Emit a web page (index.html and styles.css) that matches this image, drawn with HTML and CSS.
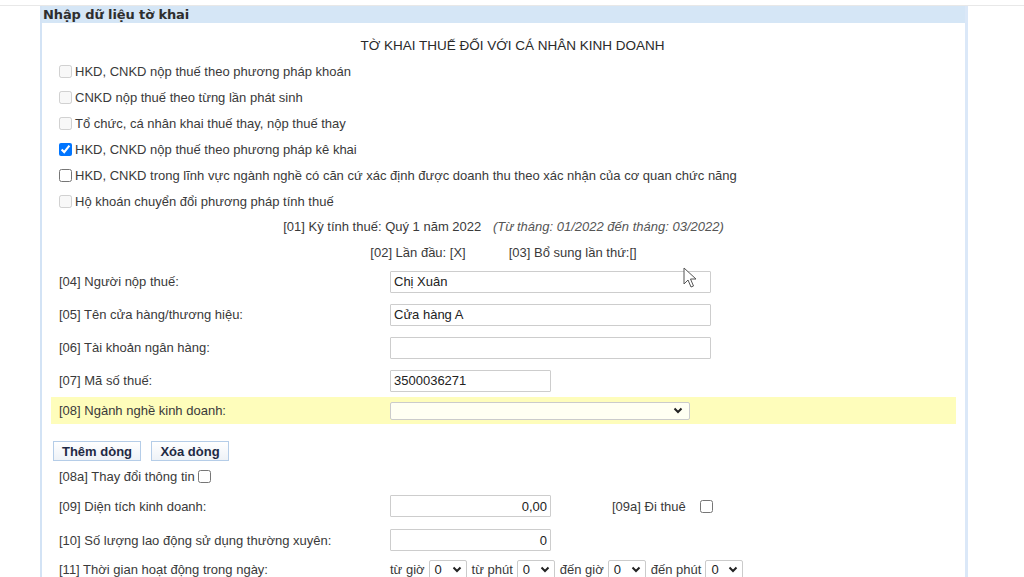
FILE: index.html
```html
<!DOCTYPE html>
<html lang="vi">
<head>
<meta charset="utf-8">
<title>Nhập dữ liệu tờ khai</title>
<link rel="stylesheet" href="styles.css">
</head>
<body>
<div class="topbar"></div>
<div class="panel">
  <div class="panel-head">Nhập dữ liệu tờ khai</div>
  <div class="panel-body">
    <div class="title">TỜ KHAI THUẾ ĐỐI VỚI CÁ NHÂN KINH DOANH</div>
    <div class="checks">
      <label class="chk disabled"><input type="checkbox" disabled>HKD, CNKD nộp thuế theo phương pháp khoán</label>
      <label class="chk disabled"><input type="checkbox" disabled>CNKD nộp thuế theo từng lần phát sinh</label>
      <label class="chk disabled"><input type="checkbox" disabled>Tổ chức, cá nhân khai thuế thay, nộp thuế thay</label>
      <label class="chk"><input type="checkbox" checked>HKD, CNKD nộp thuế theo phương pháp kê khai</label>
      <label class="chk"><input type="checkbox">HKD, CNKD trong lĩnh vực ngành nghề có căn cứ xác định được doanh thu theo xác nhận của cơ quan chức năng</label>
      <label class="chk disabled"><input type="checkbox" disabled>Hộ khoán chuyển đổi phương pháp tính thuế</label>
    </div>
    <div class="period">[01] Kỳ tính thuế: Quý 1 năm 2022 <em class="range">(Từ tháng: 01/2022 đến tháng: 03/2022)</em></div>
    <div class="period2"><span>[02] Lần đầu: [X]</span><span>[03] Bổ sung lần thứ:[]</span></div>

    <div class="row"><span class="lbl">[04] Người nộp thuế:</span><input class="txt wide" type="text" value="Chị Xuân"></div>
    <div class="row"><span class="lbl">[05] Tên cửa hàng/thương hiệu:</span><input class="txt wide" type="text" value="Cửa hàng A"></div>
    <div class="row"><span class="lbl">[06] Tài khoản ngân hàng:</span><input class="txt wide" type="text" value=""></div>
    <div class="row"><span class="lbl">[07] Mã số thuế:</span><input class="txt short" type="text" value="3500036271"></div>
    <div class="row hl"><span class="lbl">[08] Ngành nghề kinh doanh:</span>
      <div class="sel big"><span class="val"></span><svg class="chev" width="10" height="7" viewBox="0 0 10 7"><polyline points="1.5,1.5 5,5 8.5,1.5" fill="none" stroke="#222" stroke-width="2"/></svg></div>
    </div>

    <div class="btns">
      <button class="btn b1" type="button">Thêm dòng</button>
      <button class="btn b2" type="button">Xóa dòng</button>
    </div>
    <div class="row r08a"><span>[08a] Thay đổi thông tin</span><input class="cb" type="checkbox"></div>
    <div class="row r2"><span class="lbl">[09] Diện tích kinh doanh:</span><input class="txt short num" type="text" value="0,00"><span class="rent">[09a] Đi thuê</span><input class="cb cb-rent" type="checkbox"></div>
    <div class="row r2"><span class="lbl">[10] Số lượng lao động sử dụng thường xuyên:</span><input class="txt short num" type="text" value="0"></div>
    <div class="row r3"><span class="lbl">[11] Thời gian hoạt động trong ngày:</span>
      <span class="tm">từ giờ</span>
      <div class="sel small"><span class="val">0</span><svg class="chev" width="10" height="7" viewBox="0 0 10 7"><polyline points="1.5,1.5 5,5 8.5,1.5" fill="none" stroke="#222" stroke-width="2"/></svg></div>
      <span class="tm">từ phút</span>
      <div class="sel small"><span class="val">0</span><svg class="chev" width="10" height="7" viewBox="0 0 10 7"><polyline points="1.5,1.5 5,5 8.5,1.5" fill="none" stroke="#222" stroke-width="2"/></svg></div>
      <span class="tm">đến giờ</span>
      <div class="sel small"><span class="val">0</span><svg class="chev" width="10" height="7" viewBox="0 0 10 7"><polyline points="1.5,1.5 5,5 8.5,1.5" fill="none" stroke="#222" stroke-width="2"/></svg></div>
      <span class="tm">đến phút</span>
      <div class="sel small"><span class="val">0</span><svg class="chev" width="10" height="7" viewBox="0 0 10 7"><polyline points="1.5,1.5 5,5 8.5,1.5" fill="none" stroke="#222" stroke-width="2"/></svg></div>
    </div>
  </div>
</div>
<svg class="cursor" width="14" height="22" viewBox="0 0 14 22"><path d="M1 1 L1 17 L5 13 L8 20 L10.5 19 L7.5 12 L13 12 Z" fill="#fff" stroke="#555" stroke-width="1"/></svg>
</body>
</html>
```
FILE: styles.css
```css
html, body {
  margin: 0;
  padding: 0;
  background: #fff;
}
body {
  font-family: "Liberation Sans", Arial, sans-serif;
  font-size: 13px;
  color: #3a3a3a;
  height: 577px;
  overflow: hidden;
  position: relative;
}
.topbar {
  height: 5px;
  border-bottom: 1px solid #e8e8e8;
}
.panel {
  margin-left: 40px;
  width: 928px;
  box-sizing: border-box;
  border-left: 2px solid #d3e3f5;
  border-right: 3px solid #dbe8f8;
  min-height: 600px;
}
.panel-head {
  height: 17px;
  line-height: 17px;
  background: #d5e6f6;
  font-family: "DejaVu Sans", Verdana, sans-serif;
  font-weight: bold;
  color: #2e2e2e;
  padding-left: 1px;
  font-size: 13px;
  letter-spacing: -0.1px;
}
.panel-body {
  padding: 10px 9px 0 9px;
}
.title {
  height: 25px;
  line-height: 25px;
  text-align: center;
  padding-left: 18px;
  color: #2a2a2a;
  font-size: 13.5px;
}
.checks {
  display: flex;
  flex-direction: column;
}
.chk {
  display: flex;
  align-items: center;
  height: 26px;
  padding-left: 8px;
  color: #3a3a3a;
}
.chk input {
  margin: 0 3px 0 0;
  width: 13px;
  height: 13px;
}
.period {
  height: 26px;
  line-height: 26px;
  text-align: center;
}
.range {
  margin-left: 8px;
  color: #555;
}
.period2 {
  height: 25px;
  display: flex;
  justify-content: center;
  align-items: center;
  gap: 43px;
}
.row {
  display: flex;
  align-items: center;
  height: 33px;
  padding-left: 8px;
}
.lbl {
  width: 331px;
  flex: none;
}
.txt {
  box-sizing: border-box;
  height: 22px;
  border: 1px solid #cdcdcd;
  border-radius: 1px;
  padding: 0 3px;
  font-family: "Liberation Sans", Arial, sans-serif;
  font-size: 13px;
  color: #222;
  background: #fff;
  margin: 0;
  outline: none;
}
.wide { width: 321px; }
.short { width: 161px; }
.num { text-align: right; }
.hl {
  height: 27px;
  background: #fefdbb;
}
.sel {
  box-sizing: border-box;
  display: flex;
  align-items: center;
  justify-content: space-between;
  border: 1px solid #cbcbcb;
  border-radius: 2px;
  background: #fff;
  color: #222;
}
.sel.big {
  width: 300px;
  height: 18px;
  padding: 0 6px 0 3px;
  background: #fffff2;
}
.sel.small {
  width: 38px;
  height: 19px;
  padding: 0 4px 0 5px;
  margin: 0 5px 0 4px;
}
.btns {
  display: flex;
  gap: 10px;
  margin: 17px 0 0 2px;
  height: 20px;
}
.btn {
  box-sizing: border-box;
  height: 20px;
  padding: 0;
  border: 1px solid #b5cde8;
  border-radius: 0;
  background: linear-gradient(#ffffff, #eef2f7);
  font-family: "Liberation Sans", Arial, sans-serif;
  font-weight: bold;
  font-size: 13px;
  color: #1f2a44;
}
.b1 { width: 88px; }
.b2 { width: 78px; }
.r08a {
  height: 25px;
  margin-top: 3px;
}
.cb {
  width: 13px;
  height: 13px;
  margin: 0 0 0 3px;
}
.r2 { height: 34px; }
.r3 { height: 24px; }
.rent { margin-left: 61px; }
.cb-rent { margin-left: 14px; }
.tm { color: #3a3a3a; }
.cursor {
  position: absolute;
  left: 683px;
  top: 267px;
}
```
